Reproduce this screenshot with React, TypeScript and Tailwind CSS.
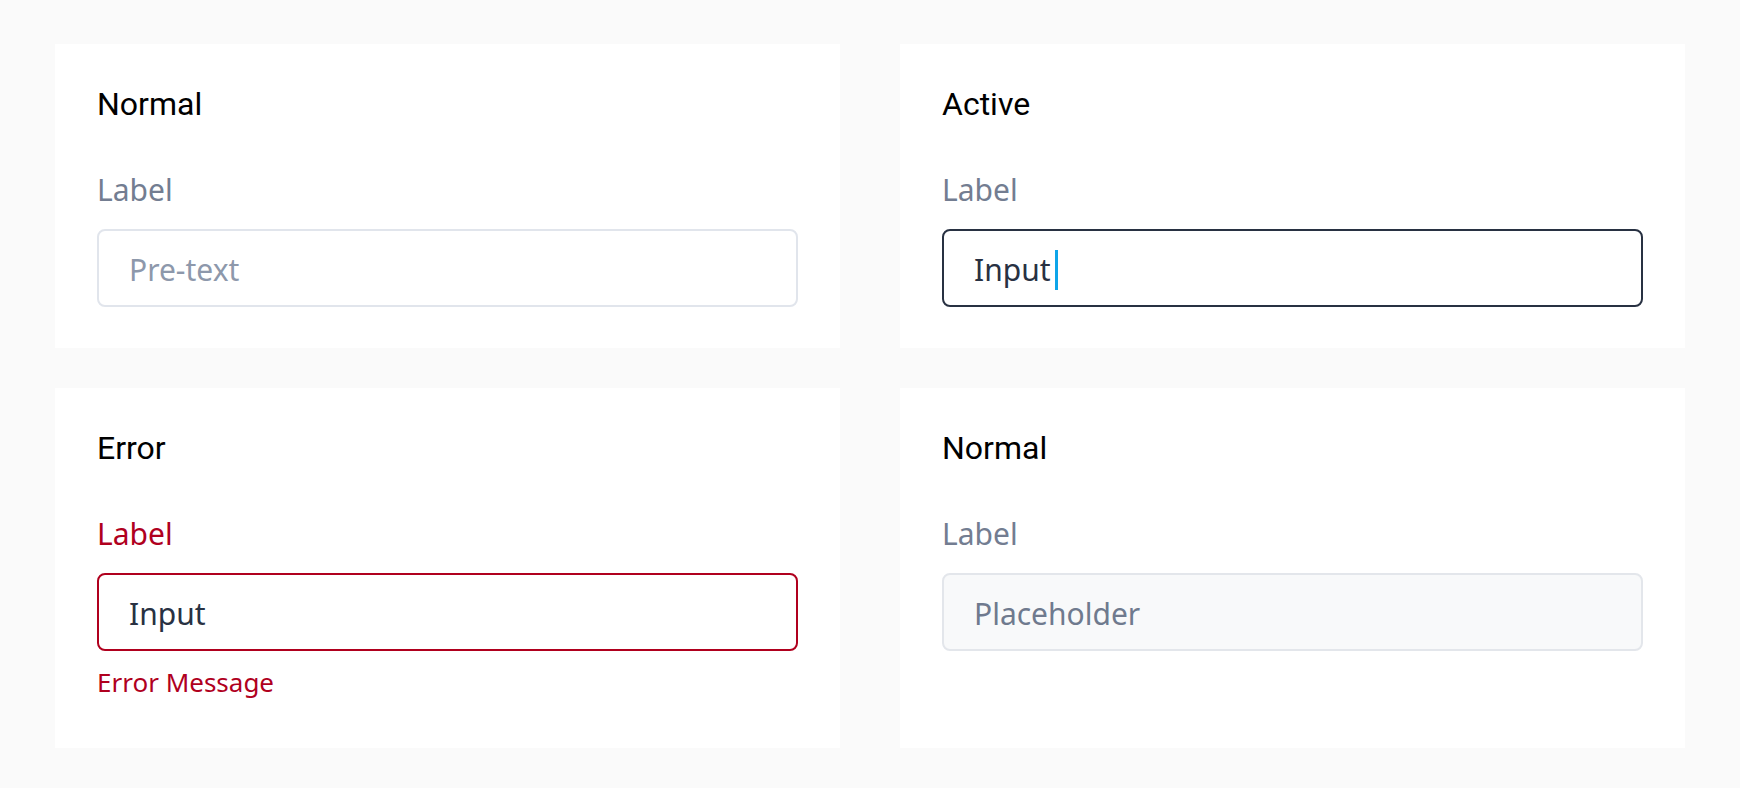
import type { ReactNode } from "react";

type FieldState = "normal" | "active" | "error" | "disabled";

const boxStyles: Record<FieldState, string> = {
  normal: "border-[#e1e5ec] bg-white text-[#8d98ab]",
  active: "border-[#283142] bg-white text-[#283142]",
  error: "border-[#b0001e] bg-white text-[#283142]",
  disabled: "border-[#e3e6eb] bg-[#f8f9fa] text-[#6f7a8e]",
};

function Card({ title, children }: { title: string; children: ReactNode }) {
  return (
    <section className="bg-white px-[42px] pt-[42px] pb-[41px]">
      <h2 className="font-['Roboto',sans-serif] text-[32px] leading-[36px] font-normal text-black">
        {title}
      </h2>
      <div className="mt-[50px]">{children}</div>
    </section>
  );
}

function Field({
  state,
  value,
  message,
}: {
  state: FieldState;
  value: string;
  message?: string;
}) {
  return (
    <div className="font-['Noto_Sans',sans-serif]">
      <div
        className={[
          "text-[30px] leading-[36px]",
          state === "error" ? "text-[#b0001e]" : "text-[#737d91]",
        ].join(" ")}
      >
        Label
      </div>
      <div
        className={[
          "mt-[21px] flex h-[78px] items-center rounded-lg border-2 px-[30px] pt-[4px] text-[30px] leading-[40px]",
          boxStyles[state],
        ].join(" ")}
      >
        <span>{value}</span>
        {state === "active" && (
          <span className="ml-[4px] h-[40px] w-[3px] bg-[#0ea5e9]" />
        )}
      </div>
      {message && (
        <div className="mt-[15px] mb-[9px] text-[26px] leading-[32px] text-[#b0001e]">
          {message}
        </div>
      )}
    </div>
  );
}

export default function App() {
  return (
    <div className="min-h-screen bg-[#fafafa]">
      <div className="grid grid-cols-2 gap-x-[60px] gap-y-[40px] px-[55px] pt-[44px] pb-[40px]">
        <Card title="Normal">
          <Field state="normal" value="Pre-text" />
        </Card>
        <Card title="Active">
          <Field state="active" value="Input" />
        </Card>
        <Card title="Error">
          <Field state="error" value="Input" message="Error Message" />
        </Card>
        <Card title="Normal">
          <Field state="disabled" value="Placeholder" />
        </Card>
      </div>
    </div>
  );
}
